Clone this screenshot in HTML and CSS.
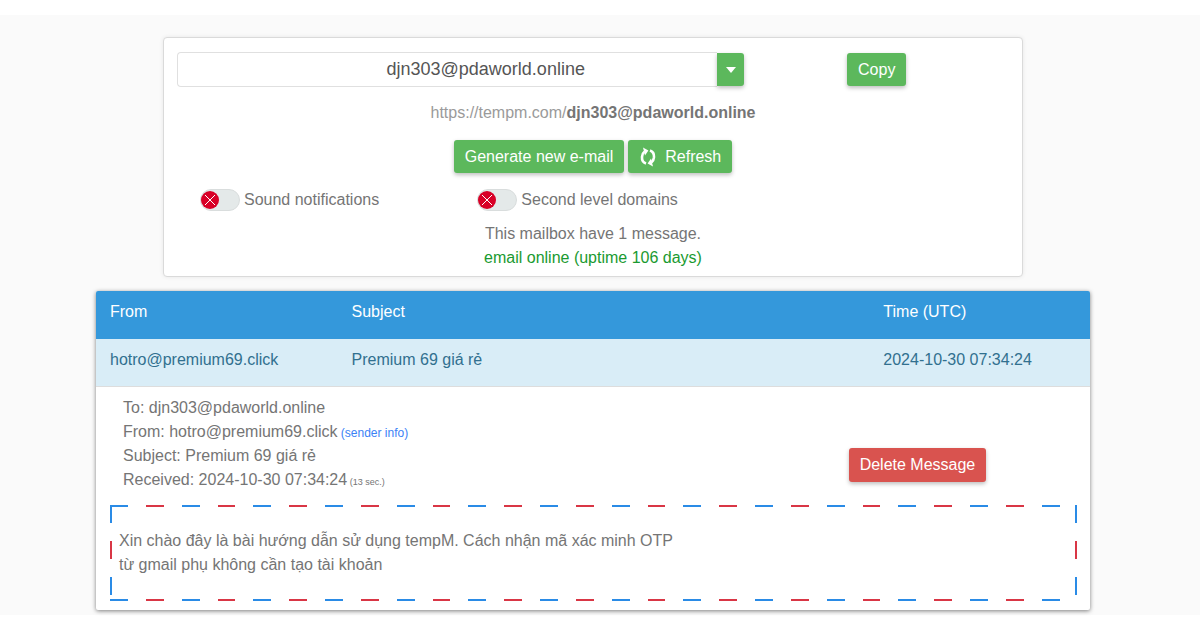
FILE: index.html
```html
<!DOCTYPE html>
<html lang="en">

<head>
    <meta charset="utf-8">
    <meta name="viewport" content="width=device-width, initial-scale=1.0">
    <title>Temp Mail</title>
    <link rel="stylesheet" href="styles.css">
</head>

<body>
    <main class="page">
        <section class="panel">
            <div class="address-row">
                <div class="address-group">
                    <input type="text" class="address-input" id="address" aria-label="E-mail address" value="djn303@pdaworld.online">
                    <button type="button" class="btn btn-caret" aria-label="Choose domain"><span class="caret"></span></button>
                </div>
                <div class="copy-col">
                    <button type="button" class="btn">Copy</button>
                </div>
            </div>
            <div class="mailbox-link"><a href="#">https://tempm.com/<b>djn303@pdaworld.online</b></a></div>
            <div class="actions">
                <button type="button" class="btn">Generate new e-mail</button>
                <button type="button" class="btn btn-refresh">
                    <svg class="icon" viewBox="0 0 18 20" width="18" height="20">
                        <path d="M7 16.4 C4 15.4 2.8 13 3 9.8 C3.2 7.6 4 5.8 5.4 4.8" fill="none" stroke="#fff" stroke-width="2.6" />
                        <path d="M4 0.4 L9.4 3.6 L6 8.4 Z" fill="#fff" />
                        <path d="M11 3.6 C14 4.6 15.2 7 15 10.2 C14.8 12.4 14 14.2 12.6 15.2" fill="none" stroke="#fff" stroke-width="2.6" />
                        <path d="M14 19.6 L8.6 16.4 L12 11.6 Z" fill="#fff" />
                    </svg>
                    Refresh
                </button>
            </div>
            <div class="options">
                <div class="option">
                    <input type="checkbox" class="switch" id="sound">
                    <label for="sound">Sound notifications</label>
                </div>
                <div class="option">
                    <input type="checkbox" class="switch" id="second_level">
                    <label for="second_level">Second level domains</label>
                </div>
            </div>
            <div class="status">
                <div>This mailbox have 1 message.</div>
                <div class="online">email online (uptime 106 days)</div>
            </div>
        </section>

        <section class="mail">
            <table class="mail-table">
                <thead>
                    <tr>
                        <th class="col-from">From</th>
                        <th class="col-subject">Subject</th>
                        <th>Time (UTC)</th>
                    </tr>
                </thead>
                <tbody>
                    <tr>
                        <td>hotro@premium69.click</td>
                        <td>Premium 69 giá rẻ</td>
                        <td>2024-10-30 07:34:24</td>
                    </tr>
                </tbody>
            </table>
            <div class="message">
                <div class="message-head">
                    <div class="message-info">
                        <div>To: djn303@pdaworld.online</div>
                        <div>From: hotro@premium69.click<a href="#" class="sender"> (sender info)</a></div>
                        <div>Subject: Premium 69 giá rẻ</div>
                        <div>Received: 2024-10-30 07:34:24<small class="age"> (13 sec.)</small></div>
                    </div>
                    <div class="message-delete">
                        <button type="button" class="btn btn-danger">Delete Message</button>
                    </div>
                </div>
                <div class="envelope">
                    Xin chào đây là bài hướng dẫn sử dụng tempM. Cách nhận mã xác minh OTP<br>
                    từ gmail phụ không cần tạo tài khoản
                </div>
            </div>
        </section>
    </main>
</body>

</html>
```
FILE: styles.css
```css
* {
    box-sizing: border-box;
}

body {
    margin: 0;
    padding: 15px 0;
    background-color: #fff;
    color: #757575;
    font-family: "Liberation Sans", Arial, sans-serif;
    font-size: 16px;
    line-height: 24px;
}

.page {
    padding: 22px 14px 5px 0;
    background-color: #fafafa;
}

.panel {
    max-width: 860px;
    margin: 0 auto 14px;
    padding: 14px 13px 6px;
    border: 1px solid #dadada;
    border-radius: 4px;
    background-color: #fff;
    box-shadow: 0 0 4px rgba(0, 0, 0, 0.08);
}

.address-row {
    display: flex;
}

.address-group {
    display: flex;
    align-items: center;
    width: 68.2%;
}

.address-input {
    flex: 1;
    min-width: 0;
    height: 35px;
    padding: 0 8px 0 84px;
    border: 1px solid #e0e0e0;
    border-right: none;
    border-radius: 4px 0 0 4px;
    color: #555;
    font-family: inherit;
    font-size: 18px;
    text-align: center;
}

.btn {
    height: 33px;
    padding: 0 11px;
    border: none;
    border-radius: 3px;
    background-color: #5cb85c;
    color: #fff;
    font-family: inherit;
    font-size: 16px;
    line-height: 24px;
    cursor: pointer;
    box-shadow: 0 2px 4px rgba(0, 0, 0, 0.26);
}

.btn:hover {
    background-color: #449d44;
}

.btn-caret {
    width: 27px;
    padding: 0;
    border-radius: 0 3px 3px 0;
}

.caret {
    display: inline-block;
    border-top: 6px solid #fff;
    border-left: 5px solid transparent;
    border-right: 5px solid transparent;
    vertical-align: middle;
}

.copy-col {
    display: flex;
    flex: 1;
    justify-content: center;
    align-items: center;
}

.mailbox-link {
    margin: 14px 0 15px;
    text-align: center;
}

.mailbox-link a {
    color: #9a9a9a;
    text-decoration: none;
}

.mailbox-link b {
    color: #757575;
}

.actions {
    display: flex;
    justify-content: center;
    gap: 4px;
}

.btn-refresh {
    display: flex;
    align-items: center;
    gap: 8px;
}

.options {
    display: grid;
    grid-template-columns: repeat(3, 1fr);
    margin: 15px 0 10px;
}

.option {
    display: flex;
    align-items: center;
    gap: 4px;
    padding-left: 23px;
}

.switch {
    appearance: none;
    width: 40px;
    height: 22px;
    margin: 0;
    padding: 1px 0;
    border: 1px solid #d9dddd;
    border-radius: 11px;
    background-color: #e4e9e9;
    cursor: pointer;
}

.switch::before {
    content: "";
    display: block;
    width: 18px;
    height: 18px;
    border-radius: 50%;
    background:
        linear-gradient(45deg, transparent 46%, #fff 46%, #fff 54%, transparent 54%) center / 10px 10px no-repeat,
        linear-gradient(-45deg, transparent 46%, #fff 46%, #fff 54%, transparent 54%) center / 10px 10px no-repeat,
        #d80027;
}

.switch:checked::before {
    margin-left: auto;
    background: #5cb85c;
}

.status {
    text-align: center;
}

.online {
    color: #1a9a30;
}

.mail {
    max-width: 994px;
    margin: 0 auto;
    border-radius: 2px;
    background-color: #fff;
    box-shadow: 0 1px 4px rgba(0, 0, 0, 0.5);
}

.mail-table {
    width: 100%;
    border-collapse: separate;
    border-spacing: 0;
    table-layout: fixed;
}

.mail-table th,
.mail-table td {
    height: 48px;
    padding: 9px 14px;
    text-align: left;
    vertical-align: top;
}

.mail-table th {
    background-color: #3498db;
    color: #fff;
    font-weight: normal;
}

.mail-table th:first-child {
    border-top-left-radius: 2px;
}

.mail-table th:last-child {
    border-top-right-radius: 2px;
}

.mail-table td {
    border-bottom: 1px solid #ddd;
    background-color: #d9edf7;
    color: #31708f;
}

.mail-table .col-from {
    width: 24.3%;
}

.mail-table .col-subject {
    width: 53.5%;
}

.message {
    padding: 9px 13px 9px 14px;
}

.message-head {
    display: flex;
    align-items: flex-end;
}

.message-info {
    width: 67%;
    padding-left: 13px;
}

.sender {
    color: #3b82f6;
    font-size: 12px;
    line-height: 12px;
    text-decoration: none;
}

.age {
    font-size: 9px;
    line-height: 12px;
}

.message-delete {
    flex: 1;
    padding-bottom: 10px;
    text-align: center;
}

.btn-danger {
    height: 34px;
    background-color: #d9534f;
    vertical-align: bottom;
}

.btn-danger:hover {
    background-color: #c9302c;
}

/* air mail border, one gradient for each side */
.envelope {
    --blue: #2a8be6;
    --red: #d93645;
    --row: repeating-linear-gradient(90deg, var(--blue) 0 1.853%, transparent 0 3.706%, var(--red) 0 5.559%, transparent 0 7.412%);
    --column: repeating-linear-gradient(var(--blue) 0 18px, transparent 0 36px, var(--red) 0 54px, transparent 0 72px);
    margin-top: 13px;
    padding: 24px 9px;
    background:
        var(--row) top / 100% 2px no-repeat,
        var(--row) bottom / 100% 2px no-repeat,
        var(--column) left / 2px 100% no-repeat,
        var(--column) right / 2px 100% no-repeat;
}
```
